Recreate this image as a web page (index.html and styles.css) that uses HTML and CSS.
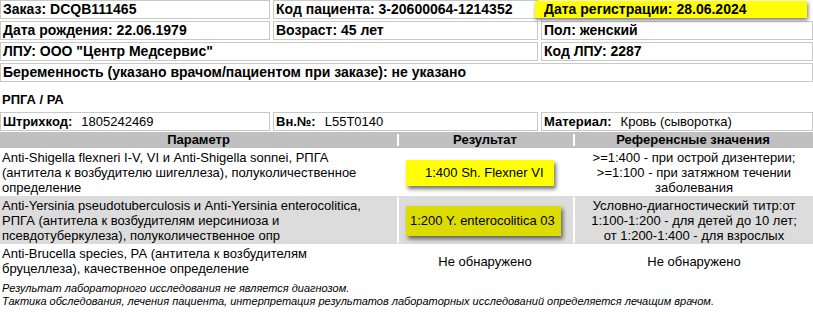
FILE: index.html
```html
<!DOCTYPE html>
<html lang="ru">
<head>
<meta charset="utf-8">
<title>Результаты</title>
<link rel="stylesheet" href="styles.css">
</head>
<body>
<div class="info">
  <div class="cell bold">Заказ: DCQB111465</div>
  <div class="cell bold">Код пациента: 3-20600064-1214352</div>
  <div class="cell bold hl">Дата регистрации: 28.06.2024</div>
  <div class="cell bold">Дата рождения: 22.06.1979</div>
  <div class="cell bold">Возраст: 45 лет</div>
  <div class="cell bold">Пол: женский</div>
  <div class="cell bold span2">ЛПУ: ООО "Центр Медсервис"</div>
  <div class="cell bold">Код ЛПУ: 2287</div>
  <div class="cell bold span3">Беременность (указано врачом/пациентом при заказе): не указано</div>
</div>
<h2 class="title">РПГА / РА</h2>
<div class="info">
  <div class="cell"><b>Штрихкод:</b><span class="val">1805242469</span></div>
  <div class="cell"><b>Вн.№:</b><span class="val">L55T0140</span></div>
  <div class="cell"><b>Материал:</b><span class="val">Кровь (сыворотка)</span></div>
</div>
<table class="results">
  <colgroup><col class="c1"><col class="c2"><col class="c3"></colgroup>
  <thead>
    <tr><th>Параметр</th><th class="sep">Результат</th><th class="sep">Референсные значения</th></tr>
  </thead>
  <tbody>
    <tr>
      <td class="param">Anti-Shigella flexneri I-V, VI и Anti-Shigella sonnei, РПГА (антитела к возбудителю шигеллеза), полуколичественное определение</td>
      <td class="res box-cell"><span class="rbox rbox1">1:400 Sh. Flexner VI</span></td>
      <td class="ref">&gt;=1:400 - при острой дизентерии;<br>&gt;=1:100 - при затяжном течении заболевания</td>
    </tr>
    <tr class="grey">
      <td class="param">Anti-Yersinia pseudotuberculosis и Anti-Yersinia enterocolitica, РПГА (антитела к возбудителям иерсиниоза и псевдотуберкулеза), полуколичественное опр</td>
      <td class="res box-cell sep"><span class="rbox rbox2">1:200 Y. enterocolitica 03</span></td>
      <td class="ref sep">Условно-диагностический титр:от 1:100-1:200 - для детей до 10 лет; от 1:200-1:400 - для взрослых</td>
    </tr>
    <tr>
      <td class="param">Anti-Brucella species, РА (антитела к возбудителям бруцеллеза), качественное определение</td>
      <td class="res">Не обнаружено</td>
      <td class="ref">Не обнаружено</td>
    </tr>
  </tbody>
</table>
<p class="note">Результат лабораторного исследования не является диагнозом.<br>Тактика обследования, лечения пациента, интерпретация результатов лабораторных исследований определяется лечащим врачом.</p>
</body>
</html>
```
FILE: styles.css
```css
html, body {
  margin: 0;
  padding: 0;
  background: #fff;
}
body {
  font-family: "Liberation Sans", Arial, sans-serif;
  font-size: 13px;
  color: #000;
  width: 813px;
}
.info {
  display: grid;
  grid-template-columns: 270px 265px 1fr;
  column-gap: 3px;
  row-gap: 2px;
  grid-auto-rows: 19px;
}
.cell {
  box-sizing: border-box;
  border: 1px solid #c8c8c8;
  padding: 0 2px;
  line-height: 17px;
  white-space: nowrap;
  overflow: visible;
}
.bold { font-weight: bold; font-size: 14px; }
.span2 { grid-column: span 2; }
.span3 { grid-column: span 3; }
.hl {
  background: #ffff00;
  border-color: #ffff00;
  margin: 1px 6px 1px -6px;
  padding-left: 8px;
  line-height: 15px;
  box-shadow: 1px 2px 4px rgba(0, 0, 0, 0.55);
  position: relative;
}
.val { margin-left: 9px; }
.title {
  font-size: 13px;
  font-weight: bold;
  line-height: 15px;
  margin: 10px 0 5px 2px;
}
.results {
  width: 813px;
  table-layout: fixed;
  border-collapse: collapse;
  margin-top: 1px;
}
.c1 { width: 397px; }
.c2 { width: 176px; }
.c3 { width: 240px; }
.results th {
  background: #c0c0c0;
  font-weight: bold;
  line-height: 14px;
  padding: 1px 2px;
  text-align: center;
}
.results th.sep {
  background: linear-gradient(#fff, #fff) left center / 2px calc(100% - 4px) no-repeat, #c0c0c0;
}
.results td {
  line-height: 15px;
  padding: 2px 2px 1px;
  vertical-align: middle;
}
.results td.param { padding-right: 25px; }
.results tr.grey td { background: #dcdcdc; }
.results tr.grey td.sep {
  background: linear-gradient(#fff, #fff) left center / 2px calc(100% - 2px) no-repeat, #dcdcdc;
}
.res { text-align: center; }
.box-cell { text-align: left; padding-left: 9px !important; }
.results td.ref { text-align: center; padding-left: 14px; padding-right: 12px; }
.rbox {
  display: inline-block;
  background: #ffff00;
  box-shadow: 2px 3px 4px rgba(0, 0, 0, 0.55);
  white-space: nowrap;
}
.rbox1 { padding: 5px 10px 6px 19px; }
.rbox2 { background: #dcdc00; padding: 7px 6px 8px 4px; }
.note {
  font-style: italic;
  font-size: 11px;
  line-height: 13px;
  margin: 5px 0 0 2px;
}
```
